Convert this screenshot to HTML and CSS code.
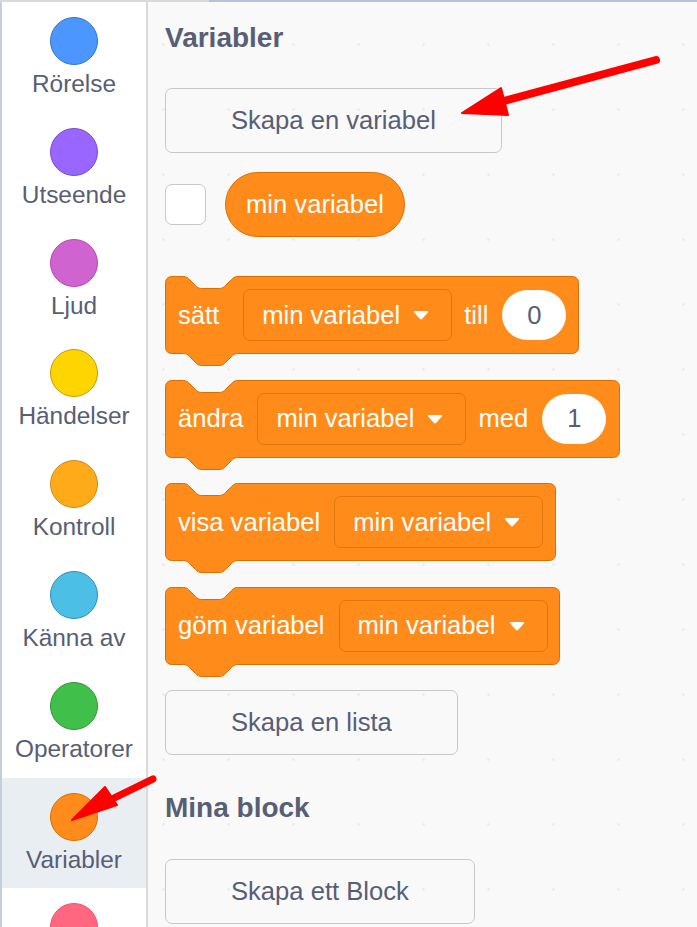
FILE: index.html
```html
<!DOCTYPE html>
<html lang="sv">
<head>
<meta charset="utf-8">
<title>Variabler</title>
<link rel="stylesheet" href="styles.css">
</head>
<body>
<div class="app">
  <div class="topbar"><div class="tb-left"></div><div class="tb-right"></div></div>
  <div class="main">
    <nav class="cats">
      <div class="cat"><span class="dot c-motion"></span><span class="cat-label">Rörelse</span></div>
      <div class="cat"><span class="dot c-looks"></span><span class="cat-label">Utseende</span></div>
      <div class="cat"><span class="dot c-sound"></span><span class="cat-label">Ljud</span></div>
      <div class="cat"><span class="dot c-events"></span><span class="cat-label">Händelser</span></div>
      <div class="cat"><span class="dot c-control"></span><span class="cat-label">Kontroll</span></div>
      <div class="cat"><span class="dot c-sensing"></span><span class="cat-label">Känna av</span></div>
      <div class="cat"><span class="dot c-operators"></span><span class="cat-label">Operatorer</span></div>
      <div class="cat cat-selected"><span class="dot c-variables"></span><span class="cat-label">Variabler</span></div>
      <div class="cat"><span class="dot c-myblocks"></span></div>
    </nav>
    <section class="palette">
      <h2 class="pal-heading">Variabler</h2>
      <div class="pal-button btn-first">Skapa en variabel</div>
      <div class="reporter-row">
        <span class="checkbox"></span>
        <span class="reporter">min variabel</span>
      </div>

      <div class="block block-set">
        <svg class="shape" width="414" height="91" viewBox="0 0 414 91"><path d="M0.5,6.5 A6,6 0 0 1 6.5,0.5 H18.5 c3,0 4.5,1.5 6,3 l6,6 c1.5,1.5 3,3 6,3 h18 c3,0 4.5,-1.5 6,-3 l6,-6 c1.5,-1.5 3,-3 6,-3 H407.5 a6,6 0 0 1 6,6 V71.5 a6,6 0 0 1 -6,6 H72.5 c-3,0 -4.5,1.5 -6,3 l-6,6 c-1.5,1.5 -3,3 -6,3 h-18 c-3,0 -4.5,-1.5 -6,-3 l-6,-6 c-1.5,-1.5 -3,-3 -6,-3 H6.5 a6,6 0 0 1 -6,-6 Z"/></svg>
        <span class="blabel">sätt</span>
        <span class="dropdown dd-wide">min variabel<svg class="caret" width="16" height="10" viewBox="0 0 16 10"><path d="M2 1 H14 Q16 1 14.8 2.6 L9.3 8.8 Q8 10 6.7 8.8 L1.2 2.6 Q0 1 2 1 Z"/></svg></span>
        <span class="blabel sp-s">till</span>
        <span class="num sp">0</span>
      </div>

      <div class="block block-change">
        <svg class="shape" width="455" height="91" viewBox="0 0 455 91"><path d="M0.5,6.5 A6,6 0 0 1 6.5,0.5 H18.5 c3,0 4.5,1.5 6,3 l6,6 c1.5,1.5 3,3 6,3 h18 c3,0 4.5,-1.5 6,-3 l6,-6 c1.5,-1.5 3,-3 6,-3 H448.5 a6,6 0 0 1 6,6 V71.5 a6,6 0 0 1 -6,6 H72.5 c-3,0 -4.5,1.5 -6,3 l-6,6 c-1.5,1.5 -3,3 -6,3 h-18 c-3,0 -4.5,-1.5 -6,-3 l-6,-6 c-1.5,-1.5 -3,-3 -6,-3 H6.5 a6,6 0 0 1 -6,-6 Z"/></svg>
        <span class="blabel">ändra</span>
        <span class="dropdown sp">min variabel<svg class="caret" width="16" height="10" viewBox="0 0 16 10"><path d="M2 1 H14 Q16 1 14.8 2.6 L9.3 8.8 Q8 10 6.7 8.8 L1.2 2.6 Q0 1 2 1 Z"/></svg></span>
        <span class="blabel sp-s">med</span>
        <span class="num sp">1</span>
      </div>

      <div class="block block-show">
        <svg class="shape" width="391" height="91" viewBox="0 0 391 91"><path d="M0.5,6.5 A6,6 0 0 1 6.5,0.5 H18.5 c3,0 4.5,1.5 6,3 l6,6 c1.5,1.5 3,3 6,3 h18 c3,0 4.5,-1.5 6,-3 l6,-6 c1.5,-1.5 3,-3 6,-3 H384.5 a6,6 0 0 1 6,6 V71.5 a6,6 0 0 1 -6,6 H72.5 c-3,0 -4.5,1.5 -6,3 l-6,6 c-1.5,1.5 -3,3 -6,3 h-18 c-3,0 -4.5,-1.5 -6,-3 l-6,-6 c-1.5,-1.5 -3,-3 -6,-3 H6.5 a6,6 0 0 1 -6,-6 Z"/></svg>
        <span class="blabel">visa variabel</span>
        <span class="dropdown sp">min variabel<svg class="caret" width="16" height="10" viewBox="0 0 16 10"><path d="M2 1 H14 Q16 1 14.8 2.6 L9.3 8.8 Q8 10 6.7 8.8 L1.2 2.6 Q0 1 2 1 Z"/></svg></span>
      </div>

      <div class="block block-hide">
        <svg class="shape" width="395" height="91" viewBox="0 0 395 91"><path d="M0.5,6.5 A6,6 0 0 1 6.5,0.5 H18.5 c3,0 4.5,1.5 6,3 l6,6 c1.5,1.5 3,3 6,3 h18 c3,0 4.5,-1.5 6,-3 l6,-6 c1.5,-1.5 3,-3 6,-3 H388.5 a6,6 0 0 1 6,6 V71.5 a6,6 0 0 1 -6,6 H72.5 c-3,0 -4.5,1.5 -6,3 l-6,6 c-1.5,1.5 -3,3 -6,3 h-18 c-3,0 -4.5,-1.5 -6,-3 l-6,-6 c-1.5,-1.5 -3,-3 -6,-3 H6.5 a6,6 0 0 1 -6,-6 Z"/></svg>
        <span class="blabel">göm variabel</span>
        <span class="dropdown sp">min variabel<svg class="caret" width="16" height="10" viewBox="0 0 16 10"><path d="M2 1 H14 Q16 1 14.8 2.6 L9.3 8.8 Q8 10 6.7 8.8 L1.2 2.6 Q0 1 2 1 Z"/></svg></span>
      </div>

      <div class="pal-button btn-list">Skapa en lista</div>
      <h2 class="pal-heading heading-my">Mina block</h2>
      <div class="pal-button btn-block">Skapa ett Block</div>
    </section>
  </div>
  <svg class="arrows" width="697" height="927" viewBox="0 0 697 927">
    <line x1="656" y1="60" x2="500" y2="102" stroke="#ff0000" stroke-width="8" stroke-linecap="round"/>
    <polygon points="462,113 501,88 508,115" fill="#ff0000" stroke="#ff0000" stroke-width="2" stroke-linejoin="round"/>
    <line x1="153" y1="779" x2="108" y2="801" stroke="#ff0000" stroke-width="7" stroke-linecap="round"/>
    <polygon points="72,820 105,787 117,805" fill="#ff0000" stroke="#ff0000" stroke-width="2" stroke-linejoin="round"/>
  </svg>
</div>
</body>
</html>
```
FILE: styles.css
```css
* { box-sizing: border-box; }

html, body {
  margin: 0;
  padding: 0;
}

body {
  width: 697px;
  height: 927px;
  overflow: hidden;
  background: #f9f9f9;
  font-family: "Liberation Sans", Arial, Helvetica, sans-serif;
  color: #575e75;
}

.app {
  position: relative;
  width: 697px;
  height: 927px;
  overflow: hidden;
}

.topbar {
  display: flex;
  height: 2px;
}
.tb-left { width: 209px; background: #d9d9d9; }
.tb-right { flex: 1; background: #b9c3d7; }

.main {
  display: flex;
  height: 925px;
}

/* category menu */
.cats {
  width: 148px;
  flex: none;
  background: #ffffff;
  border-left: 2px solid #c5cfdc;
  border-right: 2px solid #dadada;
  display: flex;
  flex-direction: column;
}

.cat {
  height: 110.8px;
  flex: none;
  display: flex;
  flex-direction: column;
  align-items: center;
  padding-top: 15px;
}

.cat-selected { background: #e9eef2; }

.dot {
  width: 48px;
  height: 48px;
  border-radius: 50%;
  border: 1px solid;
  flex: none;
}

.c-motion { background: #4c97ff; border-color: #3373cc; }
.c-looks { background: #9966ff; border-color: #774dcb; }
.c-sound { background: #cf63cf; border-color: #bd42bd; }
.c-events { background: #ffd500; border-color: #cc9900; }
.c-control { background: #ffab19; border-color: #cf8b17; }
.c-sensing { background: #4cbfe6; border-color: #2e8eb8; }
.c-operators { background: #40bf4a; border-color: #389438; }
.c-variables { background: #ff8c1a; border-color: #db6e00; }
.c-myblocks { background: #ff6680; border-color: #ff4d6a; }

.cat-label {
  margin-top: 5px;
  font-size: 24.4px;
  line-height: 28px;
  color: #575e75;
  white-space: nowrap;
}

/* palette */
.palette {
  flex: 1;
  display: flex;
  flex-direction: column;
  align-items: flex-start;
  padding-left: 17px;
  background-color: #f9f9f9;
  background-image: radial-gradient(circle, #ececec 1px, transparent 1.6px);
  background-size: 65px 65px;
  background-position: -17px 10px;
}

.pal-heading {
  margin: 20px 0 0 0;
  font-size: 28px;
  line-height: 32px;
  font-weight: bold;
  color: #575e75;
}

.heading-my { margin-top: 37px; }

.pal-button {
  height: 65px;
  padding: 0 65px;
  display: flex;
  align-items: center;
  justify-content: center;
  border: 1px solid #c8c8c8;
  border-radius: 7px;
  font-size: 25.6px;
  color: #575e75;
  white-space: nowrap;
}

.btn-first { margin-top: 34px; }
.btn-list { margin-top: 25.5px; }
.btn-block { margin-top: 34.7px; }

.reporter-row {
  margin-top: 19px;
  display: flex;
  align-items: center;
  gap: 19px;
}

.checkbox {
  width: 41px;
  height: 41px;
  background: #ffffff;
  border: 1px solid #c8c8c8;
  border-radius: 7px;
}

.reporter {
  height: 65px;
  padding: 0 20px;
  display: flex;
  align-items: center;
  background: #ff8c1a;
  border: 1px solid #db6e00;
  border-radius: 33px;
  color: #ffffff;
  font-size: 25.6px;
  white-space: nowrap;
}

/* stack blocks */
.block {
  position: relative;
  height: 78px;
  display: flex;
  align-items: center;
  padding-left: 13px;
  margin-top: 25.6px;
  color: #ffffff;
  font-size: 25.6px;
  white-space: nowrap;
}

.block-set { width: 414px; margin-top: 39px; }
.block-change { width: 455px; }
.block-show { width: 391px; }
.block-hide { width: 395px; }

.shape {
  position: absolute;
  left: 0;
  top: 0;
  z-index: 0;
  overflow: visible;
}
.shape path {
  fill: #ff8c1a;
  stroke: #db6e00;
  stroke-width: 1;
}

.blabel, .dropdown, .num {
  position: relative;
  z-index: 1;
}

.sp { margin-left: 14px; }
.sp-s { margin-left: 12px; }
.dd-wide { margin-left: 24px; }

.dropdown {
  height: 52px;
  display: flex;
  align-items: center;
  padding: 0 22px 0 18px;
  background: #ff8c1a;
  border: 1px solid #e0770a;
  border-radius: 7px;
}

.caret {
  margin-left: 13px;
  fill: #ffffff;
}

.num {
  width: 64px;
  height: 50px;
  display: flex;
  align-items: center;
  justify-content: center;
  background: #ffffff;
  border-radius: 25px;
  color: #575e75;
}

.arrows {
  position: absolute;
  left: 0;
  top: 0;
  pointer-events: none;
}
```
